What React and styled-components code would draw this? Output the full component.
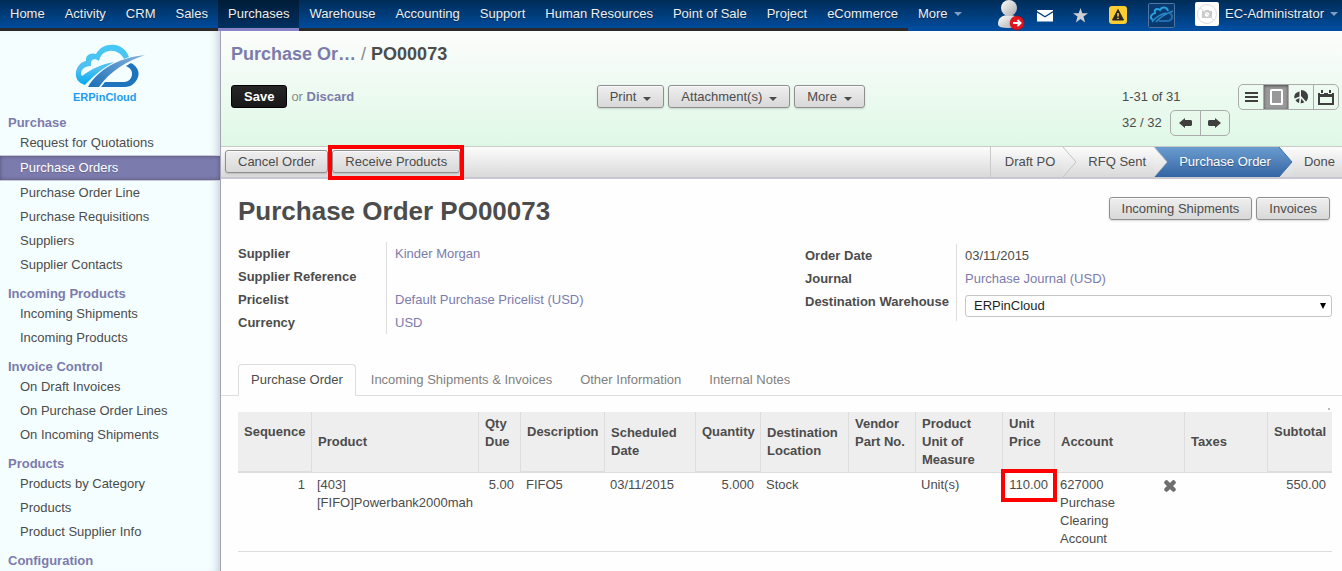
import React from "react";
import styled, { createGlobalStyle, css } from "styled-components";

const GlobalStyle = createGlobalStyle`
  * {
    box-sizing: border-box;
  }
  body {
    margin: 0;
    background: #fefefe;
    color: #4c4c4c;
    font-family: "Liberation Sans", Arial, sans-serif;
    font-size: 13px;
    line-height: 18px;
  }
  a {
    text-decoration: none;
  }
  ul {
    margin: 0;
    padding: 0;
    list-style: none;
  }
  svg {
    display: block;
  }
`;

const Page = styled.div`
  display: flex;
  flex-direction: column;
  min-height: 100vh;
`;

const TopBar = styled.header`
  display: flex;
  height: 31px;
  background: linear-gradient(#002c57, #004fa3);
`;

const Menu = styled.ul`
  display: flex;
`;

const MenuLink = styled.a`
  display: flex;
  align-items: center;
  gap: 6px;
  height: 31px;
  padding: 0 10px;
  color: #eeeeee;
  text-shadow: 0 1px 1px rgba(0, 0, 0, 0.4);
  border-bottom: 3px solid ${(props) => (props.$plain ? "transparent" : "#2a2a2a")};
  ${(props) =>
    props.$active &&
    css`
      background: linear-gradient(#001c38, #003061);
      border-bottom-color: #8785c8;
    `}
`;

const Caret = styled.span`
  border: 4px solid transparent;
  border-top-color: ${(props) => props.$color || "#4c4c4c"};
  border-bottom: 0;
`;

const Systray = styled.div`
  display: flex;
  align-items: center;
  margin-left: auto;
`;

const TrayButton = styled.button`
  display: flex;
  align-items: center;
  justify-content: center;
  width: ${(props) => props.$width}px;
  height: 31px;
  padding: 0;
  border: 0;
  background: none;
`;

const UserMenu = styled.button`
  display: flex;
  align-items: center;
  gap: 6px;
  height: 28px;
  padding: 0 4px 0 14px;
  border: 0;
  background: none;
  color: #eeeeee;
  font: inherit;
  text-shadow: 0 1px 1px rgba(0, 0, 0, 0.4);
`;

const UserSlot = styled.div`
  align-self: flex-start;
`;

const Body = styled.div`
  display: flex;
  flex: 1;
`;

const Sidebar = styled.nav`
  flex: 0 0 221px;
  height: calc(100vh - 31px);
  overflow: hidden;
  background: #f4feff;
  border-right: 1px solid #a6a4b4;
  box-shadow: inset -8px 0 8px -6px rgba(70, 90, 110, 0.3);
`;

const Logo = styled.a`
  display: flex;
  justify-content: center;
  padding: 13px 0 0;
`;

const SectionTitle = styled.div`
  padding: 9px 8px 0;
  line-height: 16px;
  font-weight: bold;
  color: #7c7bad;
`;

const SideLink = styled.a`
  display: block;
  padding: 0 20px;
  line-height: 24px;
  color: #4c4c4c;
  ${(props) =>
    props.$active &&
    css`
      color: #ffffff;
      background: #7c7bad;
      border-top: 1px solid #c9c9cf;
      border-bottom: 1px solid #c9c9cf;
      box-shadow: inset 0 0 4px rgba(0, 0, 0, 0.35);
      text-shadow: 0 1px 1px rgba(0, 0, 0, 0.2);
    `}
`;

const Main = styled.main`
  flex: 1;
  min-width: 0;
`;

const ViewHeader = styled.div`
  height: 115px;
  padding: 12px 3px 0 10px;
  background: linear-gradient(#fcfdfc, #dff8e6);
`;

const Breadcrumb = styled.div`
  font-size: 18px;
  line-height: 22px;
  font-weight: bold;
  a {
    color: #7c7bad;
  }
  span {
    font-weight: normal;
    color: #8a8a8a;
  }
`;

const HeaderRow = styled.div`
  display: flex;
  align-items: flex-start;
  padding-top: 19px;
`;

const SaveCell = styled.div`
  width: 33%;
  padding-top: 1px;
  line-height: 23px;
  color: #8a8a8a;
  a {
    font-weight: bold;
    color: #7c7bad;
  }
`;

const Button = styled.button`
  display: inline-flex;
  align-items: center;
  gap: 7px;
  height: 23px;
  padding: 0 12px;
  border: 1px solid #8f8f8f;
  border-radius: 3px;
  background: linear-gradient(#efefef, #d8d8d8);
  box-shadow: 0 1px 2px rgba(0, 0, 0, 0.15), inset 0 1px 0 rgba(255, 255, 255, 0.7);
  color: #4c4c4c;
  font: inherit;
  ${Caret} {
    margin-top: 4px;
  }
`;

const SaveButton = styled(Button)`
  margin-right: 4px;
  border-color: #000000;
  background: linear-gradient(#262626, #181818);
  box-shadow: none;
  color: #ffffff;
  font-weight: bold;
`;

const ButtonGroup = styled.div`
  display: flex;
  gap: 4px;
`;

const PrintButtons = styled(ButtonGroup)`
  padding-top: 1px;
`;

const HeaderRight = styled.div`
  display: flex;
  margin-left: auto;
`;

const Pager = styled.div`
  width: 116px;
  line-height: 26px;
  div {
    display: flex;
    gap: 8px;
  }
`;

const IconGroup = styled.span`
  display: flex;
  height: 26px;
  border: 1px solid #ababab;
  border-radius: 5px;
  overflow: hidden;
`;

const IconButton = styled.button`
  display: flex;
  align-items: center;
  justify-content: center;
  width: ${(props) => props.$width || 25}px;
  padding: 0;
  border: 0;
  border-left: 1px solid #ababab;
  background: ${(props) => (props.$active ? "#999999" : "transparent")};
  box-shadow: ${(props) => (props.$active ? "inset 0 1px 3px rgba(0, 0, 0, 0.5)" : "none")};
  &:first-child {
    border-left: 0;
  }
`;

const StatusBar = styled.div`
  display: flex;
  justify-content: space-between;
  height: 33px;
  padding-left: 4px;
  border-top: 1px solid #cacaca;
  border-bottom: 2px solid #c8c8d3;
  background: linear-gradient(#fcfcfc, #d9d9d9);
`;

const StatusButtons = styled(ButtonGroup)`
  align-items: flex-start;
  padding-top: 3px;
`;

const Highlight = styled.span`
  position: relative;
  display: inline-flex;
  &::after {
    content: "";
    position: absolute;
    inset: ${(props) => props.$inset};
    border: 4px solid #fe0000;
    pointer-events: none;
  }
`;

const Stages = styled.ol`
  display: flex;
  margin: 0;
  padding: 0;
  list-style: none;
  border-left: 1px solid #cacaca;
`;

const Stage = styled.li`
  display: flex;
  align-items: center;
  gap: 8px;
  height: 30px;
  padding-left: ${(props) => (props.$first ? 14 : 11)}px;
  padding-right: ${(props) => (props.$last ? 7 : 0)}px;
  ${(props) =>
    props.$active &&
    css`
      color: #ffffff;
      background: linear-gradient(#6b9ccf, #3465a4);
      text-shadow: 0 1px 1px rgba(0, 0, 0, 0.3);
    `}
`;

const Sheet = styled.section`
  padding: 0 10px 20px 17px;
`;

const TitleRow = styled.div`
  display: flex;
  align-items: flex-start;
  justify-content: space-between;
  padding: 18px 2px 0 0;
  h1 {
    margin: 0;
    font-size: 26px;
    line-height: 28px;
  }
`;

const Groups = styled.div`
  display: grid;
  grid-template-columns: 1fr 1fr;
  align-items: start;
  column-gap: 40px;
  padding-top: 17px;
`;

const Group = styled.div`
  margin-top: ${(props) => props.$offset || 0}px;
`;

const FieldRow = styled.div`
  display: grid;
  grid-template-columns: ${(props) => props.$label}px 1fr;
  line-height: 23px;
  label,
  b {
    font-weight: bold;
  }
`;

const FieldValue = styled.div`
  min-height: 23px;
  padding-left: 8px;
  border-left: 1px solid #dddddd;
  a {
    color: #7c7bad;
  }
`;

const SelectBox = styled.span`
  position: relative;
  display: flex;
  padding: 5px 0 4px;
  &::after {
    content: "";
    position: absolute;
    right: 6px;
    top: 13px;
    border: 3px solid transparent;
    border-top: 6px solid #000000;
    border-bottom: 0;
  }
`;

const Select = styled.select`
  width: 100%;
  height: 22px;
  padding: 0 8px;
  border: 1px solid #c6c6c6;
  border-radius: 3px;
  background: #ffffff;
  color: #1f1f1f;
  font-family: inherit;
  font-size: 13px;
  line-height: 20px;
  appearance: none;
`;

const Tabs = styled.div`
  display: flex;
  gap: 2px;
  margin: 30px -10px 0 -17px;
  padding-left: 17px;
  border-bottom: 1px solid #dddddd;
`;

const Tab = styled.button`
  height: 32px;
  margin-bottom: -1px;
  padding: 0 12px;
  border: 1px solid ${(props) => (props.$active ? "#dddddd" : "transparent")};
  border-bottom-color: ${(props) => (props.$active ? "#fefefe" : "transparent")};
  border-radius: 4px 4px 0 0;
  background: ${(props) => (props.$active ? "#fefefe" : "none")};
  color: ${(props) => (props.$active ? "#4c4c4c" : "#808080")};
  font: inherit;
`;

const ListPager = styled.div`
  display: flex;
  justify-content: flex-end;
  padding: 12px 2px 2px;
  &::after {
    content: "";
    width: 2px;
    height: 2px;
    background: #bbbbbb;
  }
`;

const Lines = styled.table`
  width: 100%;
  table-layout: fixed;
  border-collapse: separate;
  border-spacing: 0;
  border-bottom: 1px solid #dddddd;
`;

const HeadCell = styled.th`
  height: 61px;
  padding: ${(props) => props.$top || 0}px 6px 0;
  background: #eeeeee;
  border-bottom: ${(props) => (props.$sortless ? 2 : 1)}px solid #dddddd;
  text-align: left;
  vertical-align: ${(props) => (props.$top ? "top" : "middle")};
  & + & {
    border-left: 1px solid #dddddd;
  }
`;

const Cell = styled.td`
  height: 78px;
  padding: 3px 6px 0;
  text-align: ${(props) => (props.$numeric ? "right" : "left")};
  vertical-align: top;
`;

const AccountCell = styled.div`
  display: flex;
  justify-content: space-between;
  padding-right: 2px;
  span {
    width: 70px;
  }
`;

const DeleteButton = styled.button`
  align-self: flex-start;
  padding: 4px 0 0;
  border: 0;
  background: none;
`;

const menus = [
  "Home", "Activity", "CRM", "Sales", "Purchases", "Warehouse", "Accounting",
  "Support", "Human Resources", "Point of Sale", "Project", "eCommerce",
];

const sections = [
  {
    title: "Purchase",
    items: [
      "Request for Quotations", "Purchase Orders", "Purchase Order Line",
      "Purchase Requisitions", "Suppliers", "Supplier Contacts",
    ],
  },
  { title: "Incoming Products", items: ["Incoming Shipments", "Incoming Products"] },
  {
    title: "Invoice Control",
    items: ["On Draft Invoices", "On Purchase Order Lines", "On Incoming Shipments"],
  },
  { title: "Products", items: ["Products by Category", "Products", "Product Supplier Info"] },
  { title: "Configuration", items: [] },
];

const stages = ["Draft PO", "RFQ Sent", "Purchase Order", "Done"];

const tabs = [
  "Purchase Order", "Incoming Shipments & Invoices", "Other Information", "Internal Notes",
];

const columns = [
  { label: "Sequence", width: 73, top: 11 },
  { label: "Product" },
  { label: "Qty Due", width: 42, top: 3 },
  { label: "Description", width: 84, top: 11 },
  { label: "Scheduled Date", width: 91 },
  { label: "Quantity", width: 65, top: 11 },
  { label: "Destination Location", width: 88 },
  { label: "Vendor Part No.", width: 67, top: 3 },
  { label: "Product Unit of Measure", width: 87, top: 3 },
  { label: "Unit Price", width: 52, top: 3 },
  { label: "Account", width: 130 },
  { label: "Taxes", width: 83 },
  { label: "Subtotal", width: 65, top: 11 },
];

const LogoArt = () => (
  <svg width="76" height="62" viewBox="0 0 76 62" aria-hidden="true">
    <defs>
      <linearGradient id="cloud" x1="0" y1="0" x2="0" y2="1">
        <stop offset="0" stopColor="#45c8f5" />
        <stop offset="0.6" stopColor="#4fc0f2" />
        <stop offset="1" stopColor="#03a9ef" />
      </linearGradient>
      <linearGradient id="swoosh" x1="1" y1="0" x2="0" y2="1">
        <stop offset="0" stopColor="#86b2dc" />
        <stop offset="1" stopColor="#1b6fb8" />
      </linearGradient>
    </defs>
    <path
      d="M13 41C6 39 3 34 4 28C5 22 9 18 14 17C13 11 19 8 24 10C28 3 35 0 43 1C50 2 55 7 57 13L52 15C49 9 43 6 37 7C31 8 28 12 27 17C22 13 18 16 19 22C12 22 9 26 9 30L10 32C19 25 30 20 42 18C31 24 20 33 13 41Z"
      fill="url(#cloud)"
    />
    <path d="M16 43C26 26 45 14 73 11C55 17 38 27 27 43Z" fill="url(#swoosh)" />
    <path
      d="M59 19C65 22 68 28 66 33C64 39 59 43 53 43H29L33 38H52C57 38 60 34 60 30C60 26 58 24 54 22Z"
      fill="#1f74bd"
    />
    <text
      x="1"
      y="57"
      fill="#1e9cf0"
      fontFamily="Liberation Sans, sans-serif"
      fontSize="11"
      fontWeight="bold"
    >
      ERPinCloud
    </text>
  </svg>
);

const UserIcon = () => (
  <svg width="28" height="31" viewBox="0 0 28 31" aria-hidden="true">
    <defs>
      <linearGradient id="person" x1="0" y1="0" x2="1" y2="1">
        <stop offset="0" stopColor="#ffffff" />
        <stop offset="1" stopColor="#a9a9a9" />
      </linearGradient>
    </defs>
    <path d="M1 24C1 18 5 15 12 15C19 15 22 18 22 24C22 27 18 28 12 28C5 28 1 27 1 24Z" fill="url(#person)" />
    <ellipse cx="12" cy="8" rx="8" ry="8" fill="url(#person)" />
    <circle cx="20" cy="23" r="7" fill="#e3141b" stroke="#a80d12" strokeWidth="0.6" />
    <path d="M16 23H23M20.500 20L23.500 23L20.500 26" fill="none" stroke="#ffffff" strokeWidth="2" />
  </svg>
);

const MailIcon = () => (
  <svg width="16" height="12" viewBox="0 0 16 12" aria-hidden="true">
    <path d="M0 0H16V1L8 6L0 1Z" fill="#ffffff" />
    <path d="M0 2.500L8 7.500L16 2.500V11.500H0Z" fill="#ffffff" />
  </svg>
);

const StarIcon = () => (
  <svg width="15" height="15" viewBox="0 0 15 15" aria-hidden="true">
    <path
      d="M7.500 0L9.300 5.200H15L10.500 8.600L12.100 14.500L7.500 11.100L2.900 14.500L4.500 8.600L0 5.200H5.700Z"
      fill="#cfcfd2"
    />
  </svg>
);

const AlertIcon = () => (
  <svg width="18" height="20" viewBox="0 0 18 20" aria-hidden="true">
    <rect width="18" height="18" rx="3" fill="#fbcd32" />
    <path d="M9 3.500L14.500 14H3.500Z" fill="#2b2722" stroke="#2b2722" strokeLinejoin="round" />
    <path d="M9 7V10.500M9 11.700V13" stroke="#fbcd32" strokeWidth="1.600" />
  </svg>
);

const CloudIcon = () => (
  <svg width="27" height="25" viewBox="0 0 27 25" aria-hidden="true">
    <rect x="0.500" y="0.500" width="26" height="24" rx="1" fill="#083a70" stroke="#4f76a3" />
    <path
      d="M5 17C1 15 3 11 7 10C6 6 9 5 12 7C14 3 19 4 20 8"
      fill="none"
      stroke="#2a9ddb"
      strokeWidth="2"
    />
    <path d="M22 10C26 13 24 18 19 18H11" fill="none" stroke="#1f6fb0" strokeWidth="2" />
    <path d="M4 19C8 14 13 11 18 10M8 19C12 14 17 11 25 8" fill="none" stroke="#2a86c6" strokeWidth="1.500" />
  </svg>
);

const Avatar = () => (
  <svg width="24" height="24" viewBox="0 0 24 24" aria-hidden="true">
    <rect width="24" height="24" rx="2" fill="#ffffff" />
    <circle cx="12" cy="12" r="9.500" fill="none" stroke="#dddddd" />
    <path d="M7 9H9.500L10.500 8H13.500L14.500 9H17V16H7Z" fill="#c9c9c9" />
    <circle cx="12" cy="12.500" r="2.300" fill="#ffffff" />
    <path d="M5 6L19 18" stroke="#dddddd" />
  </svg>
);

const ListIcon = () => (
  <svg width="13" height="10" viewBox="0 0 13 10" aria-hidden="true">
    <path d="M0 1H13M0 5H13M0 9H13" stroke="#3f3f3f" strokeWidth="2" />
  </svg>
);

const FormIcon = () => (
  <svg width="13" height="16" viewBox="0 0 13 16" aria-hidden="true">
    <rect x="1" y="1" width="11" height="14" rx="0.500" fill="none" stroke="#ffffff" strokeWidth="2" />
  </svg>
);

const GraphIcon = () => (
  <svg width="14" height="14" viewBox="0 0 14 14" aria-hidden="true">
    <path d="M7 6V0C11 0 14 3 14 6.500C14 9 13 10.500 12 11.500Z" fill="#3f3f3f" />
    <path d="M5.500 1.500V6.500L0.500 8.500C-0.500 5 2 2 5.500 1.500Z" fill="#3f3f3f" />
    <path d="M1.500 10L5.500 8L5 13C3.200 12.600 2.200 11.400 1.500 10Z" fill="#3f3f3f" />
    <path d="M7.300 8.500L10.300 12.300C9 13.200 7.800 13.400 6.600 13.300Z" fill="#3f3f3f" />
  </svg>
);

const CalendarIcon = () => (
  <svg width="16" height="15" viewBox="0 0 16 15" aria-hidden="true">
    <path d="M0 3H2V4H6V3H10V4H14V3H16V15H0ZM2 7V13H14V7Z" fill="#3f3f3f" fillRule="evenodd" />
    <path d="M4 0V3M12 0V3" stroke="#3f3f3f" strokeWidth="2" />
  </svg>
);

const ArrowIcon = ({ flip }) => (
  <svg width="13" height="10" viewBox="0 0 13 10" aria-hidden="true">
    <path
      d={flip ? "M13 5L7 0V2H1L0 3V7L1 8H7V10Z" : "M0 5L6 0V2H12L13 3V7L12 8H6V10Z"}
      fill="#3f3f3f"
    />
  </svg>
);

const Chevron = ({ fill, from, to, line }) => (
  <svg width="14" height="30" viewBox="0 0 14 30" aria-hidden="true">
    <defs>
      <linearGradient id={fill} x1="0" y1="0" x2="0" y2="1">
        <stop offset="0" stopColor={from} />
        <stop offset="1" stopColor={to} />
      </linearGradient>
    </defs>
    <path d="M0 0L13 15L0 30Z" fill={`url(#${fill})`} />
    <path d="M0 0L13 15L0 30" fill="none" stroke={line} />
  </svg>
);

const ActiveStageEnd = styled.span`
  background: linear-gradient(#fcfcfc, #dcdcdc);
`;

const BeforeActive = styled.span`
  background: linear-gradient(#6b9ccf, #3465a4);
`;

const renderChevron = (index) => {
  if (index === 0) {
    return <Chevron fill="stage0" from="#fcfcfc" to="#dcdcdc" line="#c4c4c4" />;
  }
  if (index === 1) {
    return (
      <BeforeActive>
        <Chevron fill="stage1" from="#fcfcfc" to="#dcdcdc" line="#cacaca" />
      </BeforeActive>
    );
  }
  return (
    <ActiveStageEnd>
      <Chevron fill="stage2" from="#6b9ccf" to="#3465a4" line="#3f70ad" />
    </ActiveStageEnd>
  );
};

const DeleteIcon = () => (
  <svg width="12" height="12" viewBox="0 0 12 12" aria-hidden="true">
    <path d="M2.500 2.500L9.500 9.500M9.500 2.500L2.500 9.500" stroke="#6e6e6e" strokeWidth="4.500" strokeLinecap="round" />
  </svg>
);

const Navigation = () => (
  <TopBar>
    <Menu>
      {menus.map((name) => (
        <li key={name}>
          <MenuLink href="#" $active={name === "Purchases"}>{name}</MenuLink>
        </li>
      ))}
      <li>
        <MenuLink href="#" $plain>
          More <Caret $color="#7f9dc0" />
        </MenuLink>
      </li>
    </Menu>
    <Systray>
      <TrayButton $width={28} aria-label="Switch user"><UserIcon /></TrayButton>
      <TrayButton $width={40} aria-label="Messages"><MailIcon /></TrayButton>
      <TrayButton $width={30} aria-label="Favorites"><StarIcon /></TrayButton>
      <TrayButton $width={46} aria-label="Warnings"><AlertIcon /></TrayButton>
      <TrayButton $width={40} aria-label="Cloud"><CloudIcon /></TrayButton>
      <UserSlot>
        <UserMenu>
          <Avatar />
          EC-Administrator
          <Caret $color="#7f9dc0" />
        </UserMenu>
      </UserSlot>
    </Systray>
  </TopBar>
);

const SideMenu = () => (
  <Sidebar>
    <Logo href="#" aria-label="Home"><LogoArt /></Logo>
    {sections.map((section) => (
      <div key={section.title}>
        <SectionTitle>{section.title}</SectionTitle>
        {section.items.map((item) => (
          <SideLink href="#" key={item} $active={item === "Purchase Orders"}>{item}</SideLink>
        ))}
      </div>
    ))}
  </Sidebar>
);

const Header = () => (
  <ViewHeader>
    <Breadcrumb>
      <a href="#">Purchase Or…</a> <span>/</span> PO00073
    </Breadcrumb>
    <HeaderRow>
      <SaveCell>
        <SaveButton>Save</SaveButton>
        or <a href="#">Discard</a>
      </SaveCell>
      <PrintButtons>
        <Button>Print <Caret /></Button>
        <Button>Attachment(s) <Caret /></Button>
        <Button>More <Caret /></Button>
      </PrintButtons>
      <HeaderRight>
        <Pager>
          <div>1-31 of 31</div>
          <div>
            32 / 32
            <IconGroup>
              <IconButton $width={29} aria-label="Previous"><ArrowIcon /></IconButton>
              <IconButton $width={29} aria-label="Next"><ArrowIcon flip /></IconButton>
            </IconGroup>
          </div>
        </Pager>
        <IconGroup>
          <IconButton $width={24} aria-label="List"><ListIcon /></IconButton>
          <IconButton aria-label="Form" $active><FormIcon /></IconButton>
          <IconButton aria-label="Graph"><GraphIcon /></IconButton>
          <IconButton aria-label="Calendar"><CalendarIcon /></IconButton>
        </IconGroup>
      </HeaderRight>
    </HeaderRow>
  </ViewHeader>
);

const Status = () => (
  <StatusBar>
    <StatusButtons>
      <Button>Cancel Order</Button>
      <Highlight $inset="-5px -4px -7px -4px">
        <Button>Receive Products</Button>
      </Highlight>
    </StatusButtons>
    <Stages>
      {stages.map((stage, index) => (
        <Stage
          key={stage}
          $first={index === 0}
          $last={index === stages.length - 1}
          $active={stage === "Purchase Order"}
        >
          {stage}
          {index < stages.length - 1 && renderChevron(index)}
        </Stage>
      ))}
    </Stages>
  </StatusBar>
);

const Fields = () => (
  <Groups>
    <Group>
      <FieldRow $label={148}><b>Supplier</b><FieldValue><a href="#">Kinder Morgan</a></FieldValue></FieldRow>
      <FieldRow $label={148}><b>Supplier Reference</b><FieldValue /></FieldRow>
      <FieldRow $label={148}><b>Pricelist</b><FieldValue><a href="#">Default Purchase Pricelist (USD)</a></FieldValue></FieldRow>
      <FieldRow $label={148}><b>Currency</b><FieldValue><a href="#">USD</a></FieldValue></FieldRow>
    </Group>
    <Group $offset={2}>
      <FieldRow $label={151}><b>Order Date</b><FieldValue>03/11/2015</FieldValue></FieldRow>
      <FieldRow $label={151}><b>Journal</b><FieldValue><a href="#">Purchase Journal (USD)</a></FieldValue></FieldRow>
      <FieldRow $label={151}>
        <label htmlFor="warehouse">Destination Warehouse</label>
        <FieldValue>
          <SelectBox>
            <Select id="warehouse" defaultValue="ERPinCloud">
              <option>ERPinCloud</option>
            </Select>
          </SelectBox>
        </FieldValue>
      </FieldRow>
    </Group>
  </Groups>
);

const OrderLines = () => (
  <Lines>
    <colgroup>
      {columns.map((column) => (
        <col key={column.label} width={column.width} />
      ))}
    </colgroup>
    <thead>
      <tr>
        {columns.map((column) => (
          <HeadCell key={column.label} $top={column.top} $sortless={column.top === 11}>
            {column.label}
          </HeadCell>
        ))}
      </tr>
    </thead>
    <tbody>
      <tr>
        <Cell $numeric>1</Cell>
        <Cell>[403]<br />[FIFO]Powerbank2000mah</Cell>
        <Cell $numeric>5.00</Cell>
        <Cell>FIFO5</Cell>
        <Cell>03/11/2015</Cell>
        <Cell $numeric>5.000</Cell>
        <Cell>Stock</Cell>
        <Cell />
        <Cell>Unit(s)</Cell>
        <Cell $numeric>
          <Highlight $inset="-7px -9px -8px -8px">110.00</Highlight>
        </Cell>
        <Cell>
          <AccountCell>
            <span>627000 Purchase Clearing Account</span>
            <DeleteButton aria-label="Delete"><DeleteIcon /></DeleteButton>
          </AccountCell>
        </Cell>
        <Cell />
        <Cell $numeric>550.00</Cell>
      </tr>
    </tbody>
  </Lines>
);

class App extends React.Component {
  render() {
    return (
      <Page>
        <GlobalStyle />
        <Navigation />
        <Body>
          <SideMenu />
          <Main>
            <Header />
            <Status />
            <Sheet>
              <TitleRow>
                <h1>Purchase Order PO00073</h1>
                <ButtonGroup>
                  <Button>Incoming Shipments</Button>
                  <Button>Invoices</Button>
                </ButtonGroup>
              </TitleRow>
              <Fields />
              <Tabs>
                {tabs.map((tab) => (
                  <Tab key={tab} $active={tab === "Purchase Order"}>{tab}</Tab>
                ))}
              </Tabs>
              <ListPager />
              <OrderLines />
            </Sheet>
          </Main>
        </Body>
      </Page>
    );
  }
}

export default App;
